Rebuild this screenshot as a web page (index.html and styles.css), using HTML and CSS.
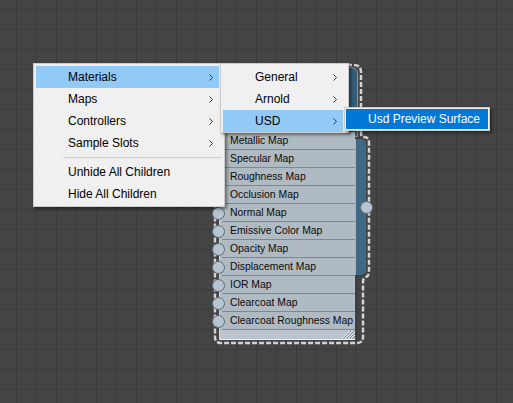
FILE: index.html
```html
<!DOCTYPE html>
<html>
<head>
<meta charset="utf-8">
<link rel="stylesheet" href="styles.css">
</head>
<body>
<div class="canvas">
  <svg class="outline" width="513" height="403" viewBox="0 0 513 403">
    <path d="M221 65 L354 65 Q361 65 361 72 L361 133 Q361 137 364 137 Q369 137 369 143 L369 271 Q369 276 366 277 Q363 278 363 282 L363 337 Q363 343 357 343 L221 343 Q215 343 215 337 L215 72 Q215 65 221 65 Z" fill="none" stroke="#d3d3d3" stroke-width="2.5" stroke-dasharray="5 2"/>
  </svg>
  <div class="node-header"></div>
  <div class="node-bar"><span class="port port-out"></span></div>
  <div class="node-body">
    <div class="row"><span class="port"></span>Metallic Map</div>
    <div class="row"><span class="port"></span>Specular Map</div>
    <div class="row"><span class="port"></span>Roughness Map</div>
    <div class="row"><span class="port"></span>Occlusion Map</div>
    <div class="row"><span class="port"></span>Normal Map</div>
    <div class="row"><span class="port"></span>Emissive Color Map</div>
    <div class="row"><span class="port"></span>Opacity Map</div>
    <div class="row"><span class="port"></span>Displacement Map</div>
    <div class="row"><span class="port"></span>IOR Map</div>
    <div class="row"><span class="port"></span>Clearcoat Map</div>
    <div class="row"><span class="port"></span>Clearcoat Roughness Map</div>
    <div class="node-foot">
      <svg class="grip" width="14" height="8" viewBox="0 0 14 8">
        <path d="M1 8 L9 0 M4 8 L12 0 M7 8 L14 1 M10 8 L14 4" stroke="#eef1f4" stroke-width="1"/>
        <path d="M2 8 L10 0 M5 8 L13 0 M8 8 L14 2 M11 8 L14 5" stroke="#7e8892" stroke-width="1"/>
      </svg>
    </div>
  </div>

  <div class="menu menu-main">
    <div class="item hl"><span>Materials</span><svg class="arrow" width="4" height="7" viewBox="0 0 4 7"><path d="M0.5 0.5 L3.5 3.5 L0.5 6.5" fill="none" stroke="#333" stroke-width="1"/></svg></div>
    <div class="item"><span>Maps</span><svg class="arrow" width="4" height="7" viewBox="0 0 4 7"><path d="M0.5 0.5 L3.5 3.5 L0.5 6.5" fill="none" stroke="#333" stroke-width="1"/></svg></div>
    <div class="item"><span>Controllers</span><svg class="arrow" width="4" height="7" viewBox="0 0 4 7"><path d="M0.5 0.5 L3.5 3.5 L0.5 6.5" fill="none" stroke="#333" stroke-width="1"/></svg></div>
    <div class="item"><span>Sample Slots</span><svg class="arrow" width="4" height="7" viewBox="0 0 4 7"><path d="M0.5 0.5 L3.5 3.5 L0.5 6.5" fill="none" stroke="#333" stroke-width="1"/></svg></div>
    <div class="sep"><div class="sep-line"></div></div>
    <div class="item"><span>Unhide All Children</span></div>
    <div class="item"><span>Hide All Children</span></div>
  </div>

  <div class="menu menu-sub">
    <div class="item"><span>General</span><svg class="arrow" width="4" height="7" viewBox="0 0 4 7"><path d="M0.5 0.5 L3.5 3.5 L0.5 6.5" fill="none" stroke="#333" stroke-width="1"/></svg></div>
    <div class="item"><span>Arnold</span><svg class="arrow" width="4" height="7" viewBox="0 0 4 7"><path d="M0.5 0.5 L3.5 3.5 L0.5 6.5" fill="none" stroke="#333" stroke-width="1"/></svg></div>
    <div class="item hl"><span>USD</span><svg class="arrow" width="4" height="7" viewBox="0 0 4 7"><path d="M0.5 0.5 L3.5 3.5 L0.5 6.5" fill="none" stroke="#333" stroke-width="1"/></svg></div>
  </div>

  <div class="menu menu-leaf">
    <div class="leaf-item">Usd Preview Surface</div>
  </div>
</div>
</body>
</html>
```

FILE: styles.css
```css
html, body {
  margin: 0;
  padding: 0;
}

body {
  width: 513px;
  height: 403px;
  overflow: hidden;
  background: #444444;
}

.canvas {
  position: relative;
  width: 513px;
  height: 403px;
  overflow: hidden;
  background-color: #444444;
  background-image:
    linear-gradient(#3b3b3b 1px, transparent 1px),
    linear-gradient(90deg, #3b3b3b 1px, transparent 1px);
  background-size: 20px 20px;
  background-position: 16px 9px;
  font-family: "Liberation Sans", Arial, sans-serif;
}

.outline {
  position: absolute;
  left: 0;
  top: 0;
  pointer-events: none;
}

/* node pieces placed on the free canvas */
.node-header {
  position: absolute;
  left: 217px;
  top: 67px;
  width: 141px;
  height: 70px;
  box-sizing: border-box;
  background: linear-gradient(90deg, #2a4a60, #355d78);
  border: 1px solid #8297a6;
  border-radius: 6px 6px 0 0;
}

.node-bar {
  position: absolute;
  left: 355px;
  top: 139px;
  width: 11px;
  height: 136px;
  box-sizing: border-box;
  background: #3f6887;
  border-left: 1px solid #9fb4c4;
  border-radius: 0 5px 5px 0;
}

.node-body {
  position: absolute;
  left: 219px;
  top: 132px;
  width: 136px;
  height: 208px;
  box-sizing: border-box;
  background: #b0bac3;
  border-left: 1px solid #cfd6dd;
  display: flex;
  flex-direction: column;
}

.row {
  position: relative;
  height: 18px;
  flex: none;
  margin-left: 2px;
  box-sizing: border-box;
  border-bottom: 1px solid #7e8892;
  padding-left: 8px;
  font-size: 10.4px;
  line-height: 18px;
  color: #0a0a0a;
  white-space: nowrap;
}

.port {
  position: absolute;
  left: -10.5px;
  top: 2.5px;
  width: 13px;
  height: 13px;
  box-sizing: border-box;
  border-radius: 50%;
  background: #b6c3d0;
  border: 1px solid #5c6a78;
}

.port-out {
  left: 3.5px;
  top: 61.5px;
}

.node-foot {
  flex: 1;
  background: #bcc5ce;
  border-bottom: 1px solid #eef1f4;
  display: flex;
  justify-content: flex-end;
  align-items: flex-end;
}

.grip {
  display: block;
}

/* context menus */
.menu {
  position: absolute;
  box-sizing: border-box;
  background: #f0f0f0;
  border: 1px solid #cccccc;
  box-shadow: 2px 2px 3px rgba(0, 0, 0, 0.45);
  font-size: 12px;
  color: #000;
}

.menu-main {
  left: 33px;
  top: 63px;
  width: 192px;
  height: 144px;
  padding: 2px 5px 1px 2px;
}

.menu-sub {
  left: 220px;
  top: 63px;
  width: 129px;
  height: 70px;
  padding: 2px 5px 0 2px;
}

.menu-leaf {
  left: 344px;
  top: 107px;
  width: 146px;
  height: 24px;
  padding: 1px;
}

.item {
  height: 22px;
  display: flex;
  align-items: center;
  padding: 0 6px 0 32px;
  white-space: nowrap;
}

.item.hl {
  background: #91c9f7;
}

.arrow {
  margin-left: auto;
  display: block;
}

.sep {
  height: 7px;
  display: flex;
  align-items: center;
  padding-left: 27px;
  margin-right: -3px;
}

.sep-line {
  flex: 1;
  height: 1px;
  background: #cccccc;
}

.leaf-item {
  height: 20px;
  line-height: 20px;
  background: #0078d7;
  color: #ffffff;
  padding-left: 22px;
  white-space: nowrap;
}
```
